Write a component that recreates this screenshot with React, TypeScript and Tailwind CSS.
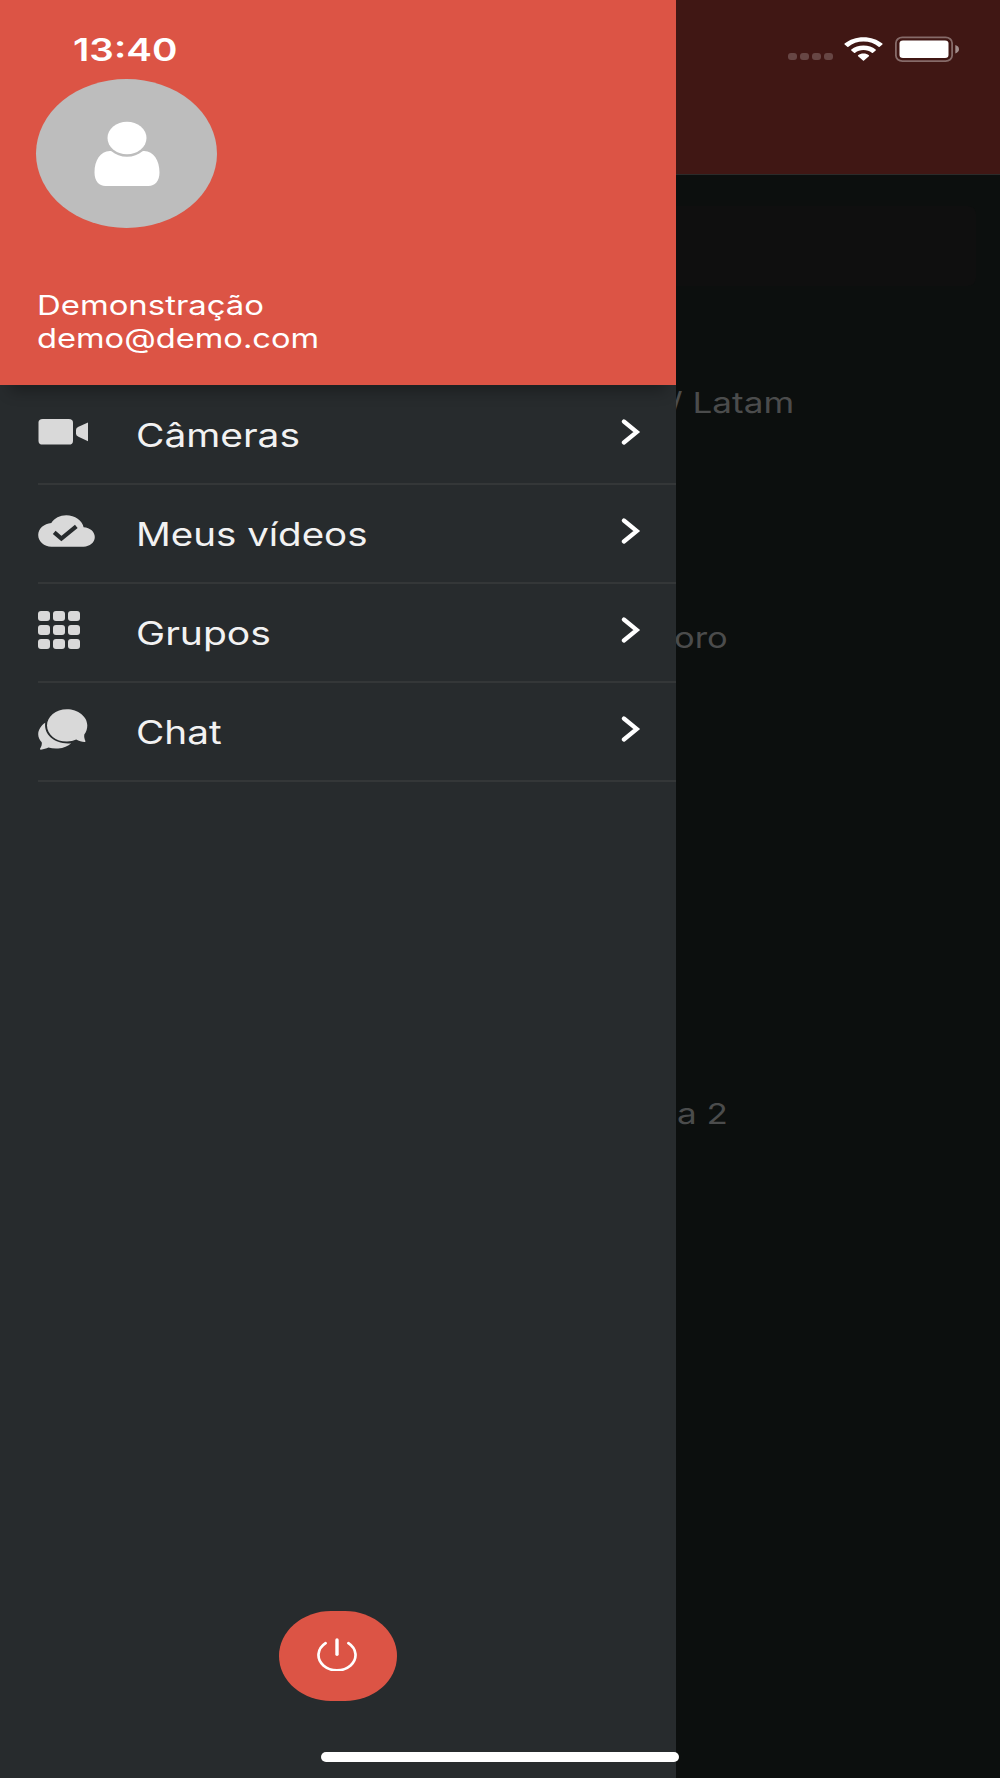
import type { ReactNode } from "react";
import clsx from "clsx";

function CameraIcon() {
  return (
    <svg className="h-[26px] w-[50px]" viewBox="0 0 50 26" fill="currentColor">
      <rect x="0.5" y="0" width="34.5" height="25.500" rx="4.200" ry="3.600" />
      <path d="M50 3.5v18.700l-9.500-4.400q-2.500-1.200-2.500-3v-4q0-1.800 2.500-3z" />
    </svg>
  );
}

function CloudDoneIcon() {
  return (
    <svg className="h-8 w-[57px]" viewBox="0 0 57 32">
      <path
        fill="currentColor"
        d="M45.6 12.3C44.2 5.3 37 0.3 28.3 0.3c-6.4 0-12 3-15 7.8C6 8.700 0.200 13.800 0.200 20c0 6.600 6 11.700 13.200 11.700h32.200c6.200 0 11.200-4.200 11.200-9.600 0-5.200-4.600-9.400-11.200-9.800z"
      />
      <path
        d="M16.200 17.400l7.200 6.200L38.300 11.300"
        fill="none"
        stroke="#272b2d"
        strokeWidth="4.200"
      />
    </svg>
  );
}

function GridIcon() {
  return (
    <div className="grid w-[42px] grid-cols-3 gap-x-[3px] gap-y-1">
      {Array.from({ length: 9 }, (_, i) => (
        <span key={i} className="h-[10px] w-3 rounded-[3px] bg-current" />
      ))}
    </div>
  );
}

function ChatIcon() {
  return (
    <svg className="mt-0.5 h-[41px] w-[50px]" viewBox="0 0 50 41" fill="currentColor">
      <path d="M7.200 13.700C3 16.500 0.200 20.800 0.200 25.200c0 3 1.400 5.800 3.500 8 .6 2-.5 4.800-1.700 6.600-.3.700.2 1 .9.900 2.900-.4 5.400-1.200 7.500-2.200 3 .9 6.400 1.300 9.800 1 5.300-.4 10-2.400 13-5.300C18 35.800 5.500 26.500 7.200 13.700z" />
      <path d="M28.900 0.200C17.800 0.200 9 7.500 9 16.400s8.800 16.200 19.900 16.200c3.400 0 6.700-.7 9.300-2 2.700 1.400 5.600 2.200 8.400 2.400.7.100 1-.3.800-.9-.9-2-1.500-4.200-1.100-6.500 2-2.700 3-5.800 3-9.300C49.300 7.500 40 0.200 28.900 0.200z" />
    </svg>
  );
}

function ChevronIcon() {
  return (
    <svg className="h-[26px] w-5" viewBox="0 0 20 26" fill="none">
      <path
        d="M2.900 2.500L15.800 13 2.900 23.500"
        stroke="white"
        strokeWidth="4.200"
        strokeLinecap="round"
      />
    </svg>
  );
}

function PowerIcon() {
  return (
    <svg
      className="h-[33px] w-10"
      viewBox="0 0 40 33"
      fill="none"
      stroke="white"
      strokeLinecap="round"
    >
      <path d="M8.600 5.200A18.500 15.200 0 1 0 31.400 5.200" strokeWidth="2.700" />
      <path d="M20 2v14.300" strokeWidth="3.400" />
    </svg>
  );
}

// Extended text, the whole interface uses a wide face
function Wide({ className, children }: { className?: string; children: ReactNode }) {
  return (
    <span className={clsx("inline-block origin-left whitespace-pre", className)}>
      {children}
    </span>
  );
}

const menu = [
  { label: "Câmeras", icon: <CameraIcon />, scale: "scale-x-[1.215]" },
  { label: "Meus vídeos", icon: <CloudDoneIcon />, scale: "scale-x-[1.203]" },
  { label: "Grupos", icon: <GridIcon />, scale: "scale-x-[1.22]" },
  { label: "Chat", icon: <ChatIcon />, scale: "scale-x-[1.21]" },
];

function StatusBar() {
  return (
    <div className="absolute inset-x-0 top-0 flex h-[98px] items-center justify-between pr-[41px] pl-[73px] text-white">
      <Wide className="mt-0.5 scale-x-[1.245] text-[31px] font-semibold">13:40</Wide>
      <div className="flex items-center">
        <div className="mt-[15px] mr-[11px] flex gap-[3px]">
          {[0, 1, 2, 3].map((i) => (
            <span key={i} className="h-[7px] w-[9px] rounded-[3px] bg-[#674644]" />
          ))}
        </div>
        <svg className="mr-3 h-6 w-[39px]" viewBox="0 0 39 24" fill="white">
          <path d="M19.500 0.200c7.300 0 14 2.400 18.900 6.300.3.300.3.700 0 1l-2.700 2.200c-.3.300-.8.300-1.100 0-4-3.300-9.300-5.200-15.100-5.200S8.400 6.400 4.400 9.700c-.3.300-.8.300-1.100 0L.600 7.500c-.3-.3-.3-.7 0-1C5.500 2.600 12.200.2 19.500.2z" />
          <path d="M19.500 8.500c4.700 0 9 1.500 12.200 4 .3.300.3.700 0 1L29 15.700c-.3.300-.8.300-1.200 0-2.200-1.700-5.100-2.700-8.300-2.700s-6.100 1-8.300 2.700c-.4.300-.9.300-1.200 0l-2.700-2.200c-.3-.3-.3-.7 0-1 3.200-2.500 7.500-4 12.200-4z" />
          <path d="M19.500 16.600c2.100 0 4 .6 5.400 1.700.3.300.3.700 0 1L20 23.400c-.3.300-.7.300-1 0l-4.900-4.100c-.3-.3-.3-.7 0-1 1.400-1.100 3.300-1.700 5.400-1.700z" />
        </svg>
        <svg className="h-[26px] w-16" viewBox="0 0 64 26">
          <rect x="0.900" y="1.400" width="56.200" height="23.700" rx="6.500" ry="5.500" fill="none" stroke="#866b69" strokeWidth="1.800" />
          <rect x="4.500" y="4.500" width="49" height="17.500" rx="3.500" ry="3" fill="white" />
          <path d="M60.300 9.100c2.300.7 3.700 2.200 3.700 4.200s-1.400 3.500-3.700 4.200z" fill="#a38f8d" />
        </svg>
      </div>
    </div>
  );
}

function Drawer() {
  return (
    <aside className="flex w-[676px] shrink-0 flex-col bg-[#272b2d]">
      <header className="h-[385px] bg-[#dc5445] pt-[79px] pl-9 text-white shadow-[0_16px_14px_-10px_rgba(0,0,0,0.3)]">
        <div className="flex h-[149px] w-[181px] items-center justify-center rounded-[50%] bg-[#bdbdbd]">
          <svg className="h-[66px] w-[66px]" viewBox="0 0 66 66" fill="white">
            <ellipse cx="33" cy="17" rx="19.500" ry="16.300" />
            <path d="M17.500 30.200C21.500 33.700 27 35.700 33 35.700s11.500-2 15.500-5.500C59 29 65.500 39 65.500 51.500 65.500 60 61 65 54.500 65h-43C5 65 .5 60 .5 51.500.5 39 7 29 17.500 30.200z" />
          </svg>
        </div>
        <div className="mt-[60.500px] flex flex-col items-start pl-px text-[27.500px] leading-[33.500px]">
          <Wide className="scale-x-[1.195]">Demonstração</Wide>
          <Wide className="scale-x-[1.187]">demo@demo.com</Wide>
        </div>
      </header>
      <nav className="flex-1 pt-px pl-[38.400px]">
        {menu.map((item) => (
          <a
            key={item.label}
            className="flex h-[99.100px] items-center border-b-2 border-[#343738] pr-[35px]"
          >
            <div className="mb-1.5 w-[97.500px] text-[#d9d9d9]">{item.icon}</div>
            <Wide className={clsx("mt-0.5 text-[32px] text-[#f2f2f2]", item.scale)}>
              {item.label}
            </Wide>
            <div className="mb-1.5 ml-auto">
              <ChevronIcon />
            </div>
          </a>
        ))}
      </nav>
      <button className="mb-[77px] ml-[279px] flex h-[90px] w-[118px] items-center justify-center rounded-[52px/45px] bg-[#dc5445] pr-0.5 pb-[3px]">
        <PowerIcon />
      </button>
    </aside>
  );
}

function DimmedPage() {
  return (
    <main className="min-w-0 flex-1 overflow-hidden bg-[#0c0f0e] text-[29px] leading-[36px] text-[#4b4c4c]">
      <div className="h-[175px] border-b border-[#2b2b2a] bg-[#401714]" />
      <div className="mt-[31px] mr-6 h-20 rounded-r-lg bg-[#0f0f0f]" />
      <div className="mt-[99px] -ml-[6px] h-[235px]">
        <Wide className="scale-x-[1.210]">/ Latam</Wide>
      </div>
      <div className="-ml-[2px] h-[476px]">
        <Wide className="scale-x-[1.190]">oro</Wide>
      </div>
      <div className="pl-px">
        <Wide className="scale-x-[1.210]">a 2</Wide>
      </div>
    </main>
  );
}

export default function App() {
  return (
    <div className="relative flex h-[1778px] w-[1000px] overflow-hidden font-['Inter',sans-serif]">
      <Drawer />
      <DimmedPage />
      <StatusBar />
      <div className="absolute bottom-4 left-[321px] h-[10px] w-[358px] rounded-full bg-white" />
    </div>
  );
}
